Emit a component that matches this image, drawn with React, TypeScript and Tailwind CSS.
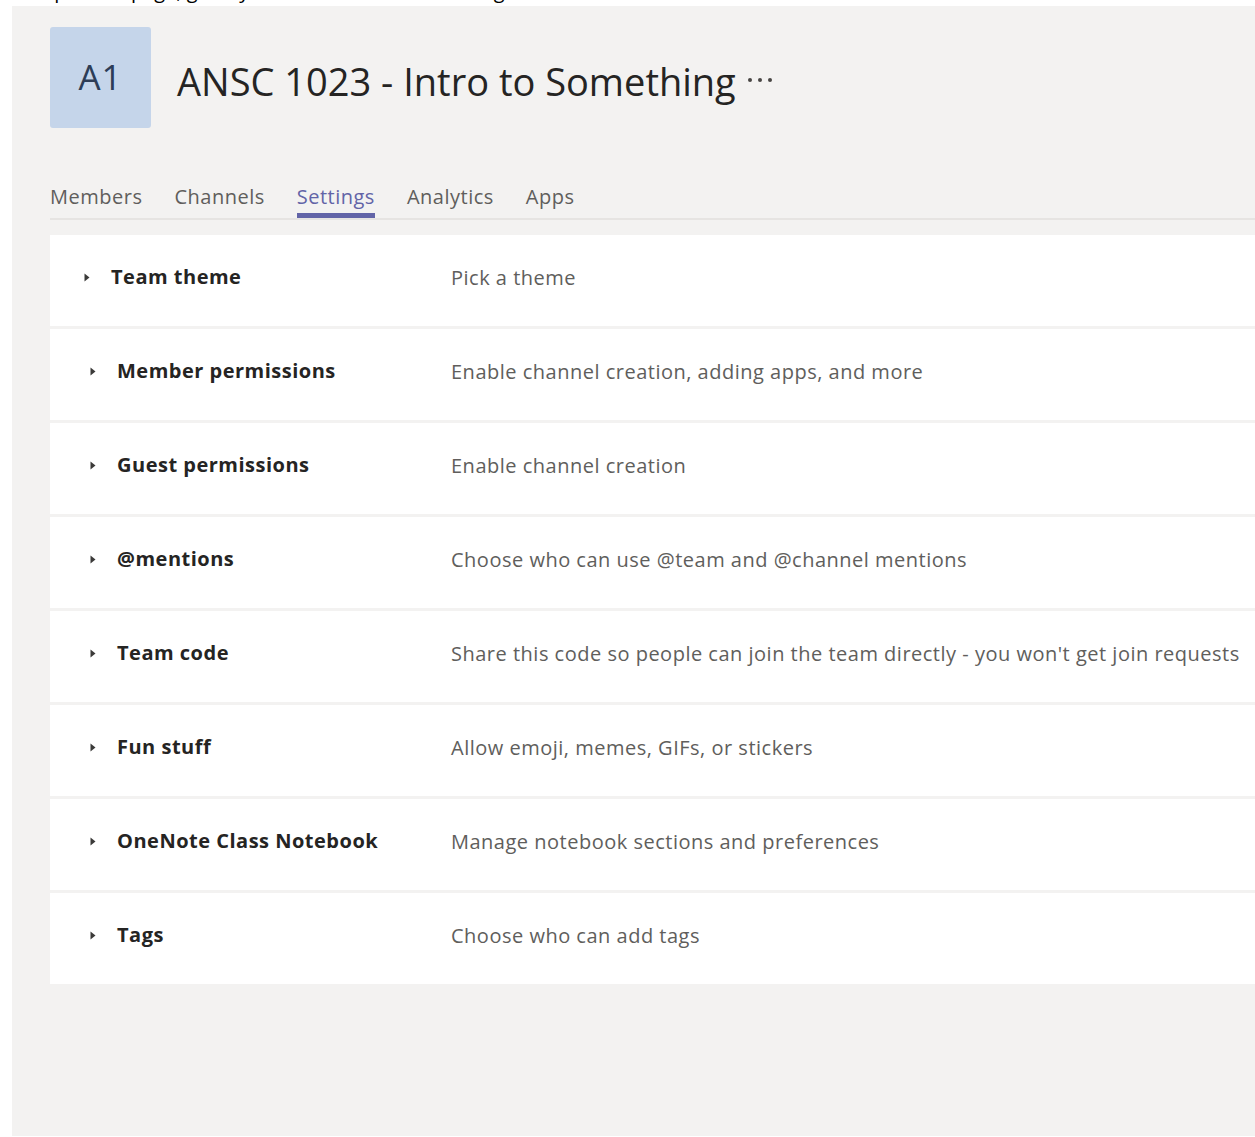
import React from "react";

type Setting = { title: string; desc: string; indent?: boolean };

const settings: Setting[] = [
  { title: "Team theme", desc: "Pick a theme", indent: false },
  { title: "Member permissions", desc: "Enable channel creation, adding apps, and more", indent: true },
  { title: "Guest permissions", desc: "Enable channel creation", indent: true },
  { title: "@mentions", desc: "Choose who can use @team and @channel mentions", indent: true },
  { title: "Team code", desc: "Share this code so people can join the team directly - you won't get join requests", indent: true },
  { title: "Fun stuff", desc: "Allow emoji, memes, GIFs, or stickers", indent: true },
  { title: "OneNote Class Notebook", desc: "Manage notebook sections and preferences", indent: true },
  { title: "Tags", desc: "Choose who can add tags", indent: true },
];

const tabs = ["Members", "Channels", "Settings", "Analytics", "Apps"];

function Caret() {
  return (
    <svg width="6" height="9" viewBox="0 0 6 9" className="shrink-0">
      <path d="M0.5 0.5 L5.5 4.5 L0.5 8.5 Z" fill="#3b3a39" />
    </svg>
  );
}

export default function App() {
  return (
    <div
      className="w-[1255px] h-[1137px] bg-white overflow-hidden flex flex-col"
      style={{ fontFamily: '"Open Sans", "Noto Sans", sans-serif' }}
    >
      {/* instruction line above the team page, scrolled mostly out of view */}
      <div className="h-[6px] overflow-hidden relative shrink-0">
        <div className="absolute left-[14px] top-[-20px] text-[20px] leading-[22px] text-black whitespace-nowrap">
          To open the page, go to your team and select Settings
        </div>
      </div>

      <div className="ml-[12px] flex-1 bg-[#f3f2f1] mb-[1px] flex flex-col pl-[38px]">
        {/* team header */}
        <div className="flex items-center pt-[21px]">
          <div className="w-[101px] h-[101px] rounded-[3px] bg-[#c5d5ea] flex items-center justify-center">
            <span className="text-[35px] text-[#2d3d57] tracking-[1px]">A1</span>
          </div>
          <div className="ml-[26px] flex items-center mt-[6px]">
            <span className="text-[38px] leading-none text-[#252423]">ANSC 1023 - Intro to Something</span>
            <span className="ml-[12px] flex gap-[6px] mt-[-2px]">
              <span className="w-[4px] h-[4px] rounded-full bg-[#484644]" />
              <span className="w-[4px] h-[4px] rounded-full bg-[#484644]" />
              <span className="w-[4px] h-[4px] rounded-full bg-[#484644]" />
            </span>
          </div>
        </div>

        {/* tabs */}
        <div className="mt-[53px] flex items-end gap-[32px] border-b-[2px] border-[#e6e4e2] h-[39px]">
          {tabs.map((t) => {
            const active = t === "Settings";
            return (
              <div key={t} className="flex flex-col items-center">
                <span
                  className={
                    "text-[20px] leading-[24px] tracking-[0.5px] " +
                    (active ? "text-[#6264a7]" : "text-[#605e5c]")
                  }
                >
                  {t}
                </span>
                <span className={"mt-[4px] h-[5px] w-full " + (active ? "bg-[#6264a7]" : "bg-transparent")} />
              </div>
            );
          })}
        </div>

        {/* settings list */}
        <div className="mt-[15px] flex flex-col gap-[3px]">
          {settings.map((s) => (
            <div key={s.title} className="bg-white h-[91px] flex items-start">
              <div
                className={
                  "w-[401px] flex items-center pt-[30px] " + (s.indent ? "pl-[40px]" : "pl-[34px]")
                }
              >
                <Caret />
                <span className="ml-[21px] text-[20px] leading-[24px] tracking-[0.5px] font-bold text-[#252423]">
                  {s.title}
                </span>
              </div>
              <div className="pt-[31px] text-[20px] leading-[24px] tracking-[0.5px] text-[#605e5c] whitespace-nowrap">
                {s.desc}
              </div>
            </div>
          ))}
        </div>
      </div>
    </div>
  );
}
